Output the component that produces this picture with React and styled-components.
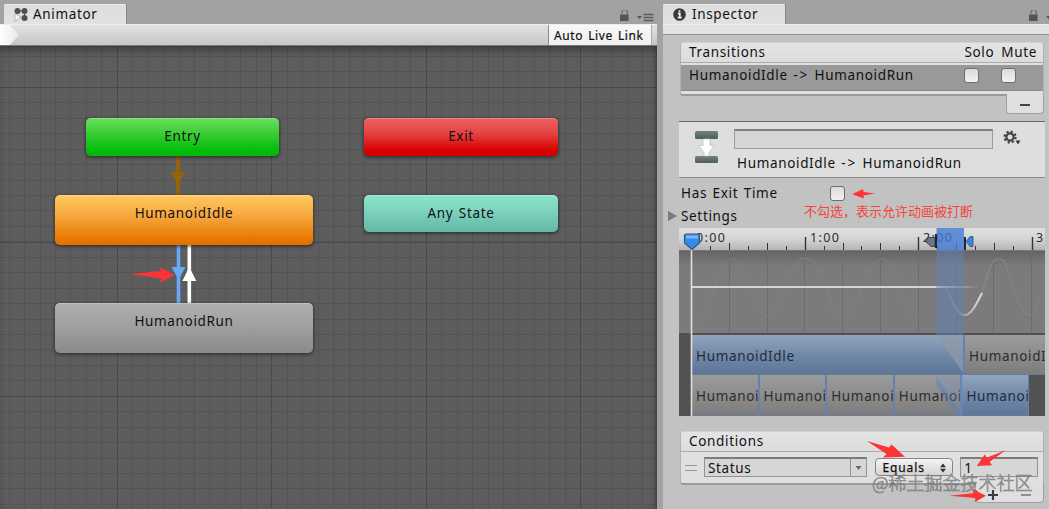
import React from "react";
import styled, { createGlobalStyle } from "styled-components";

const Global = createGlobalStyle`
  * { box-sizing: border-box; }
  body { margin: 0; background: #c2c2c2; overflow: hidden; }
`;

const Editor = styled.div`
  position: relative;
  display: flex;
  width: 1049px;
  height: 509px;
  overflow: hidden;
  background: #a2a2a2;
  color: #111;
  font: 13.5px/18px "Noto Sans", "Noto Sans CJK SC", sans-serif;
  letter-spacing: 0.66px;
  word-spacing: 1.4px;
  white-space: nowrap;
`;

const Pane = styled.section`
  display: flex;
  flex-direction: column;
  flex: none;
  width: ${(p) => p.$width}px;
  margin-right: ${(p) => p.$gap || 0}px;
`;

const TabBar = styled.header`
  display: flex;
  align-items: flex-end;
  height: 24px;
  flex: none;
  padding-left: ${(p) => p.$inset}px;
`;

const Tab = styled.div`
  display: flex;
  align-items: center;
  gap: ${(p) => p.$gap}px;
  width: ${(p) => p.$width}px;
  height: 20px;
  padding-left: 10px;
  background: linear-gradient(#dcdcdc, #e2e2e2);
  border-radius: 2px 2px 0 0;
  border-right: 1px solid #888;
  box-shadow: inset 0 1px #ececec;
`;

const TabTools = styled.div`
  display: flex;
  align-items: center;
  margin-left: auto;
  padding-right: ${(p) => p.$right || 0}px;
  margin-right: ${(p) => p.$bleed || 0}px;
  height: 15px;
`;

const Toolbar = styled.div`
  display: flex;
  justify-content: space-between;
  flex: none;
  height: 22px;
  border-top: 1px solid #eee;
  border-bottom: 1px solid #777;
  background: linear-gradient(#e2e2e2, #c6c6c6);
`;

const Crumb = styled.div`
  width: 19px;
  background: linear-gradient(90deg, #fff, #e8e8e8);
  clip-path: polygon(0 0, 10px 0, 100% 50%, 10px 100%, 0 100%);
`;

const LiveLink = styled.div`
  width: 104px;
  margin-right: 5px;
  padding-left: 5px;
  border-left: 1px solid #8a8a8a;
  border-right: 1px solid #aaa;
  background: linear-gradient(#f8f8f8, #efefef);
  font-size: 12px;
  line-height: 22px;
  letter-spacing: 0.6px;
  -webkit-text-stroke: 0.2px #111;
`;

const Canvas = styled.div`
  position: relative;
  flex: 1;
  overflow: hidden;
  background: #5d5d5d;
`;

const CanvasShade = styled.div`
  position: absolute;
  inset: 0;
  box-shadow: inset 0 7px 9px -3px rgba(0, 0, 0, 0.35), inset -3px 0 4px -2px rgba(0, 0, 0, 0.3);
`;

const Drawing = styled.svg`
  position: absolute;
  left: 0;
  top: 0;
  overflow: visible;
`;

const nodeFill = {
  green: "linear-gradient(#68df5e, #35cc30 45%, #00bd0b 85%, #02b80a)",
  red: "linear-gradient(#ec605e, #e34443 40%, #d90000 85%, #d00000)",
  orange: "linear-gradient(#ffc860, #f7a941 40%, #e87800 88%, #df7000)",
  teal: "linear-gradient(#8be4cb, #7dd2bd 45%, #62b7a7)",
  gray: "linear-gradient(#b0b0b0, #a0a0a0 45%, #8b8b8b)",
};

const Node = styled.div`
  position: absolute;
  left: ${(p) => p.$x}px;
  top: ${(p) => p.$y}px;
  width: ${(p) => p.$w}px;
  height: ${(p) => p.$h}px;
  padding-top: 9px;
  text-align: center;
  border-radius: 5px;
  background: ${(p) => nodeFill[p.$tone]};
  box-shadow: 0 1px 3px 1px rgba(20, 20, 20, 0.5), inset 0 1px rgba(255, 255, 255, 0.22);
`;

const Strip = styled.div`
  height: 11px;
  flex: none;
  background: #e2e2e2;
  border-top: 1px solid #eee;
  border-bottom: 1px solid #909090;
`;

const InspectorBody = styled.div`
  flex: 1;
  min-height: 0;
  padding: 7px 4px 0 16px;
  background: #c2c2c2;
`;

const Card = styled.div`
  width: 364px;
  margin: ${(p) => p.$top || 0}px 0 0 1px;
  border-radius: 4px 4px 3px 3px;
  border: 1px solid #b2b2b2;
  border-top-color: #d2d2d2;
  border-bottom: 2px solid #999;
  background: #e0e0e0;
`;

const CardHead = styled.div`
  display: flex;
  height: 20px;
  padding: 0 6px 0 8px;
  line-height: 19px;
  border-bottom: 1px solid #aaa;
  background: linear-gradient(#e4e4e4, #dcdcdc);
  border-radius: 3px 3px 0 0;
`;

const HeadLabel = styled.span`
  margin-left: ${(p) => (p.$push ? "auto" : "7px")};
  &:first-child { margin-left: 0; }
`;

const SelectedRow = styled.div`
  display: flex;
  align-items: flex-start;
  height: 26px;
  margin: 2px 0 3px;
  padding: 3px 27px 0 8px;
  line-height: 15px;
  background: #999;
  border-bottom: 1px solid #8a8a8a;
`;

const Arrow = styled.span`
  letter-spacing: 1.8px;
`;

const Check = styled.span`
  flex: none;
  width: 15px;
  height: 15px;
  margin-left: ${(p) => p.$left};
  border: 1px solid #6d6d6d;
  border-radius: 3px;
  background: linear-gradient(#dadada, #f2f2f2);
`;

const Footer = styled.div`
  display: flex;
  align-items: center;
  justify-content: space-around;
  width: ${(p) => p.$w}px;
  height: 20px;
  margin: -2px 1px 0 auto;
  border: 1px solid #a0a0a0;
  border-top: 0;
  border-radius: 0 0 4px 4px;
  background: #dfdfdf;
`;

const TitleBand = styled.div`
  display: flex;
  width: 366px;
  height: 57px;
  margin-top: 7px;
  padding: 7px 0 0 16px;
  border-top: 1px solid #6a6a6a;
  border-bottom: 1px solid #8c8c8c;
  background: #dedede;
`;

const TitleMain = styled.div`
  margin: 0 10px 0 15px;
`;

const NameField = styled.div`
  width: 259px;
  height: 20px;
  border: 1px solid #9c9c9c;
  border-top: 2px solid #808080;
  background: #d5d5d5;
`;

const TitleText = styled.div`
  margin: 5px 0 0 3px;
`;

const PropRow = styled.div`
  display: flex;
  align-items: center;
  height: ${(p) => p.$h}px;
  margin-bottom: ${(p) => p.$after || 0}px;
  padding: ${(p) => p.$drop || 0}px 0 0 ${(p) => p.$left}px;
`;

const PropLabel = styled.span`
  width: 149px;
`;

const Foldout = styled.span`
  width: 0;
  height: 0;
  margin: 0 4px 0 -11px;
  border: solid transparent;
  border-width: 5px 0 5px 9px;
  border-left-color: #7b7b7b;
`;

const Timeline = styled.div`
  position: relative;
  width: 366px;
  height: 188px;
  overflow: hidden;
  background: #525252;
`;

const Ruler = styled.div`
  position: relative;
  height: 23px;
  background: linear-gradient(#e0e0e0, #d4d4d4 50%, #b4b4b4);
  border-bottom: 1px solid #777;
`;

const TimeLabel = styled.span`
  position: absolute;
  left: ${(p) => p.$x}px;
  top: 1px;
  font-size: 12.5px;
  color: #2c2c2c;
  letter-spacing: 1.4px;
`;

const Curve = styled.div`
  height: 84px;
  background: linear-gradient(#646464, #7b7b7b 15px, #7b7b7b);
  border-bottom: 2px solid #505050;
`;

const Track = styled.div`
  display: flex;
  gap: 2px;
  height: ${(p) => p.$h}px;
  padding-left: 13px;
  background: linear-gradient(90deg, transparent 13px, #6482ad 13px, #6482ad ${(p) => p.$end}px, transparent ${(p) => p.$end}px);
`;

const Clip = styled.div`
  flex: none;
  width: ${(p) => p.$w}px;
  height: 100%;
  padding: 12px 0 0 4px;
  overflow: hidden;
  color: ${(p) => (p.$blue ? "#1f2c3f" : "#2d2d2d")};
  background: ${(p) =>
    p.$blue ? "linear-gradient(#91a5c0, #7389a7 50%, #5c7699)" : "linear-gradient(#9b9b9b, #8c8c8c 50%, #7d7d7d)"};
  border-bottom: 1px solid #687b95;
`;

const ConditionRow = styled.div`
  display: flex;
  align-items: flex-start;
  height: 31px;
  padding: 5px 5px 0 4px;
`;

const Handle = styled.span`
  width: 12px;
  height: 6px;
  margin: 8px 7px 0 0;
  border: solid #949494;
  border-width: 1px 0;
`;

const Field = styled.div`
  display: flex;
  justify-content: space-between;
  width: ${(p) => p.$w}px;
  height: 20px;
  padding-left: 3px;
  line-height: 18px;
  border: 1px solid #929292;
  border-top: 2px solid #7c7c7c;
  background: #d6d6d6;
`;

const DropArrow = styled.span`
  display: flex;
  align-items: center;
  justify-content: center;
  width: 16px;
  border-left: 1px solid #929292;
`;

const Popup = styled.div`
  display: flex;
  align-items: center;
  justify-content: space-between;
  width: 78px;
  height: 18px;
  margin: 1px 7px 0 8px;
  padding: 1px 6px 0 6px;
  border: 1px solid #868686;
  border-radius: 4px;
  background: linear-gradient(#f4f4f4, #d4d4d4);
  font-size: 12px;
  letter-spacing: 0.9px;
  -webkit-text-stroke: 0.25px #111;
`;

const Note = styled.div`
  position: absolute;
  left: 804px;
  top: 202px;
  color: #f4443f;
  font: 13px/18px "Noto Sans CJK SC", sans-serif;
  letter-spacing: 0;
`;

const Watermark = styled.div`
  position: absolute;
  left: 872px;
  top: 469px;
  color: rgba(225, 225, 225, 0.75);
  font: 300 18px/26px "Noto Sans CJK SC", sans-serif;
  letter-spacing: 0;
  -webkit-text-stroke: 0.6px rgba(85, 85, 85, 0.75);
`;

const LockMenu = () => (
  <svg width="37" height="14" viewBox="0 1 37 14">
    <path d="M3 5V3.200a2.600 2.600 0 0 1 5.300 0V6" fill="none" stroke="#757575" strokeWidth="1.500" />
    <rect x="1" y="5.500" width="8.500" height="6.500" fill="#555" />
    <path d="M18 7h5l-2.500 3z" fill="#555" />
    <path d="M24.500 5.500h10M24.500 8.500h10M24.500 11.500h10" stroke="#5b5b5b" strokeWidth="1.400" />
  </svg>
);

const AnimatorIcon = () => (
  <svg width="16" height="15" viewBox="0 0 16 15">
    <g fill="#505050">
      <circle cx="3.500" cy="4" r="3" />
      <circle cx="10.500" cy="4" r="3" />
      <circle cx="10.500" cy="11" r="3" />
      <path d="M3 4.500h8v-1H3zM10 4v8h1V4z" />
    </g>
    <path d="M.8 6.500 7 10 1 14.500z" fill="#f5f5f5" stroke="#999" strokeWidth=".7" />
  </svg>
);

const InfoIcon = () => (
  <svg width="13" height="13" viewBox="0 0 13 13">
    <circle cx="6.500" cy="6.500" r="6.300" fill="#383838" />
    <path d="M6.500 2.200v2M4.800 5.700h2v4M4.700 9.700h4" fill="none" stroke="#eee" strokeWidth="1.700" />
  </svg>
);

const TransitionIcon = () => (
  <svg width="24" height="34" viewBox="0 0 24 34">
    <defs>
      <linearGradient id="slab" x2="0" y2="1">
        <stop stopColor="#72817f" />
        <stop offset="1" stopColor="#4e5e5d" />
      </linearGradient>
    </defs>
    <rect y="2" width="23" height="8" rx="1.500" fill="url(#slab)" />
    <rect y="27" width="23" height="7" rx="1.500" fill="url(#slab)" />
    <path d="M8 10h7v6.500h4.500L14 23.500V27H9v-3.500L3.500 16.500H8z" fill="#fff" stroke="#b5bdbb" strokeWidth=".7" />
  </svg>
);

const GearIcon = () => (
  <svg width="19" height="17" viewBox="0 0 19 17">
    <circle cx="7" cy="8" r="3.600" fill="none" stroke="#424242" strokeWidth="2.200" />
    <circle cx="7" cy="8" r="5.500" fill="none" stroke="#424242" strokeWidth="2.200" strokeDasharray="2.160 2.160" />
    <path d="M12.500 11.500h5l-2.500 4z" fill="#333" />
  </svg>
);

const Lines = ({ size, origin, count }) =>
  Array.from({ length: count }, (_, i) => {
    const x = Math.round(origin[0] + i * size) + 0.5;
    const y = Math.round(origin[1] + i * size) + 0.5;
    return <path key={i} d={`M${x} 0V463M0 ${y}H657`} />;
  });

const Grid = () => (
  <Drawing width="657" height="463">
    <g stroke="#545454">
      <Lines size={15.45} origin={[8.6, 9.9]} count={43} />
    </g>
    <g stroke="#494949">
      <Lines size={154.5} origin={[116.6, 41]} count={5} />
    </g>
  </Drawing>
);

const Links = () => (
  <Drawing width="657" height="463">
    <path d="M178 109v43" stroke="#936409" strokeWidth="4" />
    <path d="M171 126h14l-7 13z" fill="#936409" />
    <path d="M178.500 199v60" stroke="#68a8f4" strokeWidth="3.600" />
    <path d="M171.500 221h14l-7 13z" fill="#68a8f4" />
    <path d="M189.300 199v60" stroke="#fff" strokeWidth="3.600" />
    <path d="M182.300 235h14l-7-14z" fill="#fff" />
  </Drawing>
);

const nodes = [
  { name: "Entry", tone: "green", x: 86, y: 72, w: 193, h: 37.5 },
  { name: "Exit", tone: "red", x: 364, y: 72, w: 194, h: 38 },
  { name: "HumanoidIdle", tone: "orange", x: 55, y: 149.4, w: 258, h: 50 },
  { name: "Any State", tone: "teal", x: 364, y: 149.4, w: 194, h: 36.5 },
  { name: "HumanoidRun", tone: "gray", x: 55, y: 257, w: 258, h: 50 },
];

const TICK = 18.9;
const Ticks = () => (
  <Drawing width="366" height="22">
    {Array.from({ length: 19 }, (_, i) => {
      const x = Math.round(12.3 + i * TICK) + 0.5;
      const top = i % 6 === 0 ? 9 : i % 2 === 0 ? 15 : 18;
      return <path key={i} d={`M${x} ${top}V22`} stroke="#333" strokeWidth={i % 6 === 0 ? 1.4 : 1} />;
    })}
  </Drawing>
);

const CurveArt = () => (
  <svg width="366" height="82" viewBox="0 0 366 82">
    <defs>
      <linearGradient id="fade" gradientUnits="userSpaceOnUse" x1="260" x2="300">
        <stop stopColor="#d4d4d4" />
        <stop offset="1" stopColor="#d4d4d4" stopOpacity="0" />
      </linearGradient>
      <linearGradient id="dip" gradientUnits="userSpaceOnUse" x1="265" x2="304">
        <stop stopColor="#bbb" stopOpacity="0.1" />
        <stop offset="1" stopColor="#e4e4e4" />
      </linearGradient>
    </defs>
    <path
      d={Array.from({ length: 9 }, (_, i) => `M${Math.round(12 + (i + 1) * 37.8) + 0.5} 0V82`).join("")}
      stroke="#6c6c6c"
    />
    <path
      d="M13 70C28 85 38 5 54 8S78 85 94 60S113 2 130 8S153 80 167 65S190 5 205 8S226 80 241 62"
      fill="none"
      stroke="#828282"
    />
    <path d="M13 36H262" stroke="#d4d4d4" strokeWidth="2" />
    <path d="M262 35h38v2h-38z" fill="url(#fade)" />
    <path d="M267 35C274 55 280 64 286 64S297 54 303 42" fill="none" stroke="url(#dip)" strokeWidth="2" />
    <path d="M303 42C309 25 311 8 319 8S326 12 328 18" fill="none" stroke="#8a8a8a" strokeWidth="1.200" />
    <path d="M328 18C337 37 341 64 350 64S357 54 360 45" fill="none" stroke="#828282" strokeWidth="1.300" />
  </svg>
);

const TimelineOverlay = () => (
  <Drawing width="366" height="188">
    <path d="M257.500 0H285v22h-27.500z" fill="#427bd2" fillOpacity=".8" />
    <path d="M257.500 22H285v85h-27.500z" fill="#5e81b7" fillOpacity=".5" />
    <path d="M257.500 107L284 145v-38z" fill="#8f9aa8" fillOpacity=".75" />
    <path d="M257.500 148L284 188V148z" fill="#6f93c6" fillOpacity=".28" />
    <path d="M257.500 148V158L278 188H284z" fill="#5b82b8" fillOpacity=".5" />
    <path d="M249 9.500h7v9h-4l-5-4.500z" fill="#697987" stroke="#333" strokeWidth=".8" />
    <path d="M257 6v14M286 9v13" stroke="#1d2635" strokeWidth="2" />
    <path d="M294 8.500v10h-3l-4-5 4-5z" fill="#3d82d3" stroke="#315782" strokeWidth=".8" />
    <path d="M12.500 21v167" stroke="#e0e0e0" strokeWidth="1.600" />
    <path d="M5.500 8q0-2 2-2h11q2 0 2 2v7l-7.500 6.500-7.500-6.500z" fill="#348be9" stroke="#365580" strokeWidth="1.200" />
    <path d="M7 7.500h12v3H7z" fill="#78b6f5" />
  </Drawing>
);

const Annotations = () => (
  <Drawing width="1049" height="509" fill="#fb3535">
    <path d="M129.500 274l31.500-3-1-3.700 15 7.500-15 7.900 1-4.200z" />
    <path d="M852.300 194.300l10.700-5.300.5 3 11.500 1.500-11.500 2 .3 3z" />
    <path d="M867 441l22 6.500 2.500-3 13.500 12.200-22 .8 3.500-3.500z" />
    <path d="M1005.700 450.300l-16 11.500 2.300 3.500-15.300.7 8.300-11.700 1.500 3.500z" />
    <path d="M949.300 495.800l24-2.500-1-4.300 13.700 6.700-11 6.300.5-4z" />
  </Drawing>
);

const TransitionName = () => (
  <span>
    HumanoidIdle <Arrow>-&gt;</Arrow> HumanoidRun
  </span>
);

export default function App() {
  return (
    <Editor>
      <Global />
      <Pane $width={657} $gap={6}>
        <TabBar $inset={4}>
          <Tab $width={123} $gap={3}>
            <AnimatorIcon />
            Animator
          </Tab>
          <TabTools $right={1}>
            <LockMenu />
          </TabTools>
        </TabBar>
        <Toolbar>
          <Crumb />
          <LiveLink>Auto Live Link</LiveLink>
        </Toolbar>
        <Canvas>
          <Grid />
          <CanvasShade />
          <Links />
          {nodes.map((n) => (
            <Node key={n.name} $tone={n.tone} $x={n.x} $y={n.y} $w={n.w} $h={n.h}>
              {n.name}
            </Node>
          ))}
        </Canvas>
      </Pane>
      <Pane $width={386}>
        <TabBar $inset={0}>
          <Tab $width={123} $gap={6}>
            <InfoIcon />
            Inspector
          </Tab>
          <TabTools $bleed={-16}>
            <LockMenu />
          </TabTools>
        </TabBar>
        <Strip />
        <InspectorBody>
          <Card>
            <CardHead>
              <HeadLabel>Transitions</HeadLabel>
              <HeadLabel $push>Solo</HeadLabel>
              <HeadLabel>Mute</HeadLabel>
            </CardHead>
            <SelectedRow>
              <TransitionName />
              <Check $left="auto" />
              <Check $left="22px" />
            </SelectedRow>
          </Card>
          <Footer $w={38}>
            <svg width="12" height="4">
              <path d="M1 3h10" stroke="#444" strokeWidth="2" />
            </svg>
          </Footer>
          <TitleBand>
            <TransitionIcon />
            <TitleMain>
              <NameField />
              <TitleText>
                <TransitionName />
              </TitleText>
            </TitleMain>
            <GearIcon />
          </TitleBand>
          <PropRow $h={28} $left={2} $drop={2}>
            <PropLabel>Has Exit Time</PropLabel>
            <Check $left="0" />
          </PropRow>
          <PropRow $h={20} $left={0} $after={2}>
            <Foldout />
            Settings
          </PropRow>
          <Timeline>
            <Ruler>
              <TimeLabel $x={17}>0:00</TimeLabel>
              <TimeLabel $x={131}>1:00</TimeLabel>
              <TimeLabel $x={244}>2:00</TimeLabel>
              <TimeLabel $x={357}>3</TimeLabel>
              <Ticks />
            </Ruler>
            <Curve>
              <CurveArt />
            </Curve>
            <Track $h={40} $end={366}>
              <Clip $w={271} $blue>HumanoidIdle</Clip>
              <Clip $w={82}>HumanoidIdle</Clip>
            </Track>
            <Track $h={41} $end={350}>
              <Clip $w={65.6}>HumanoidRun</Clip>
              <Clip $w={65.6}>HumanoidRun</Clip>
              <Clip $w={65.6}>HumanoidRun</Clip>
              <Clip $w={65.6}>HumanoidRun</Clip>
              <Clip $w={65.6} $blue>HumanoidRun</Clip>
            </Track>
            <TimelineOverlay />
          </Timeline>
          <Card $top={15}>
            <CardHead>
              <HeadLabel>Conditions</HeadLabel>
            </CardHead>
            <ConditionRow>
              <Handle />
              <Field $w={164}>
                Status
                <DropArrow>
                  <svg width="7" height="4">
                    <path d="M.5 0h6l-3 4z" fill="#666" />
                  </svg>
                </DropArrow>
              </Field>
              <Popup>
                Equals
                <svg width="6" height="10">
                  <path d="M0 4.200h6L3 .5zM0 5.800h6L3 9.500z" fill="#333" />
                </svg>
              </Popup>
              <Field $w={78}>1</Field>
            </ConditionRow>
          </Card>
          <Footer $w={69}>
            <svg width="12" height="14">
              <path d="M1 9h10M6 4v10" stroke="#3c3c3c" strokeWidth="2.200" />
            </svg>
            <svg width="12" height="6">
              <path d="M1 5h10" stroke="#909090" strokeWidth="2" />
            </svg>
          </Footer>
        </InspectorBody>
      </Pane>
      <Note>不勾选，表示允许动画被打断</Note>
      <Watermark>@稀土掘金技术社区</Watermark>
      <Annotations />
    </Editor>
  );
}
